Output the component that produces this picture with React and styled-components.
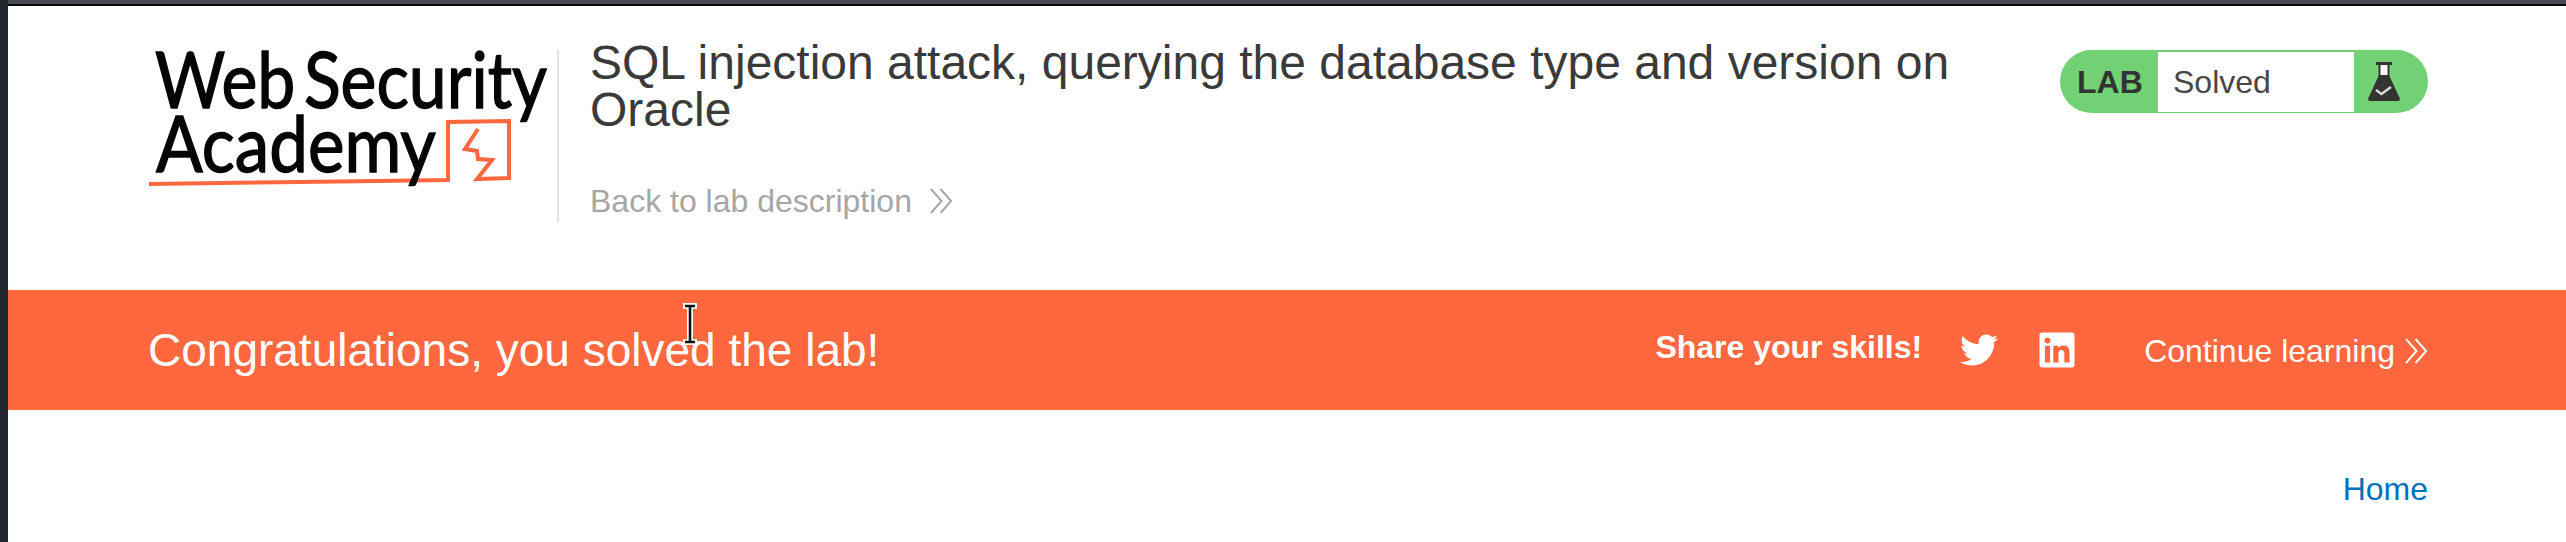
import styled, { createGlobalStyle } from "styled-components";
import { FaTwitter, FaLinkedin } from "react-icons/fa";

const orange = "#ff673e";
const green = "#72d174";
const ink = "#333332";

const GlobalStyle = createGlobalStyle`
  html, body {
    margin: 0;
    padding: 0;
    background: #fff;
    overflow: hidden;
  }
  body {
    font-family: "Liberation Sans", Arial, sans-serif;
    color: ${ink};
  }
`;

const Window = styled.div`
  position: relative;
  display: flex;
  width: 2566px;
  height: 542px;
  overflow: hidden;
`;
const SideEdge = styled.div`
  flex: 0 0 8px;
  background: #22262f;
`;
const Main = styled.div`
  flex: 1;
  display: flex;
  flex-direction: column;
`;
const TopEdge = styled.div`
  height: 4px;
  background: #474c55;
  border-bottom: 2px solid #0a0a0a;
`;
const Header = styled.header`
  height: 284px;
  box-sizing: border-box;
  padding: 24px 138px 0 141px;
  display: flex;
  align-items: flex-start;
`;
const LogoBox = styled.a`
  flex: 0 0 408px;
  height: 192px;
  display: block;
`;
const TitleBlock = styled.div`
  flex: 0 0 1400px;
  height: 172px;
  margin-top: 20px;
  box-sizing: border-box;
  border-left: 2px solid #e3e3e3;
  padding-left: 31px;
`;
const Title = styled.h2`
  margin: -11px 0 0;
  font-size: 48px;
  line-height: 47px;
  font-weight: 400;
  color: #3a3a3a;
`;
const BackLink = styled.a`
  display: flex;
  align-items: center;
  gap: 18px;
  margin-top: 48px;
  font-size: 32px;
  line-height: 40px;
  color: #a6a6a6;
`;
const Badge = styled.div`
  margin: 20px 0 0 auto;
  width: 368px;
  height: 63px;
  box-sizing: border-box;
  border-radius: 32px;
  background: ${green};
  display: flex;
  align-items: stretch;
  padding: 2px 0 1px;
`;
const BadgeLabel = styled.span`
  flex: 0 0 98px;
  box-sizing: border-box;
  padding-left: 17px;
  display: flex;
  align-items: center;
  font-size: 32px;
  font-weight: 700;
`;
const BadgeStatus = styled.span`
  flex: 0 0 196px;
  box-sizing: border-box;
  padding-left: 15px;
  display: flex;
  align-items: center;
  background: #fff;
  font-size: 32px;
  color: #474747;
`;
const BadgeIcon = styled.span`
  flex: 1;
  display: flex;
  align-items: center;
  padding-left: 14px;
`;
const Banner = styled.section`
  height: 120px;
  box-sizing: border-box;
  padding: 0 138px 0 140px;
  background: ${orange};
  color: #fff;
  display: flex;
  align-items: center;
`;
const BannerText = styled.h4`
  margin: 0;
  font-size: 46px;
  font-weight: 400;
`;
const BannerActions = styled.div`
  margin-left: auto;
  display: flex;
  align-items: center;
`;
const ShareLabel = styled.span`
  font-size: 32px;
  font-weight: 700;
  margin: -6px 38px 0 0;
`;
const SocialLink = styled.a`
  display: flex;
  color: #fff;
  font-size: ${(p) => p.$size}px;
  margin-right: ${(p) => p.$gap}px;
`;
const ContinueLink = styled.a`
  display: flex;
  align-items: center;
  gap: 10px;
  margin-top: 2px;
  font-size: 32px;
  color: #fff;
`;
const Nav = styled.nav`
  display: flex;
  justify-content: flex-end;
  padding: 59px 138px 0 0;
`;
const NavLink = styled.a`
  font-size: 32px;
  line-height: 40px;
  color: #0071bc;
`;
const TextCursor = styled.svg`
  position: absolute;
  left: 682px;
  top: 303px;
`;

function Logo() {
  return (
    <LogoBox>
      <svg width="408" height="192" viewBox="149 30 408 192">
        <path
          d="M149 184 L300 182 L448 180 L448 122 L509 121 L509 178 L477 179 L492 160 L478 159 L477 151 L465 149 L478 129"
          fill="none"
          stroke={orange}
          strokeWidth="4"
          strokeLinejoin="miter"
        />
        <text x="155" y="108" fontFamily="Lato, sans-serif" fontWeight="400" fontSize="78" fill="#050505" stroke="#050505" strokeWidth="1.4" wordSpacing="-10" textLength="392" lengthAdjust="spacingAndGlyphs">
          Web Security
        </text>
        <text x="156" y="172" fontFamily="Lato, sans-serif" fontWeight="400" fontSize="78" fill="#050505" stroke="#050505" strokeWidth="1.4" textLength="280" lengthAdjust="spacingAndGlyphs">
          Academy
        </text>
      </svg>
    </LogoBox>
  );
}

function Chevrons({ color, width = 23, height = 26 }) {
  return (
    <svg width={width} height={height} viewBox="0 0 24 26" fill="none" stroke={color} strokeWidth="2" preserveAspectRatio="none">
      <path d="M1 1 L12 13 L1 25" />
      <path d="M11 1 L22 13 L11 25" />
    </svg>
  );
}

function Flask() {
  return (
    <svg width="32" height="40" viewBox="0 0 32 40">
      <path d="M8 0 H24 V3 H21.5 V14 L32 37 Q32 39 30 39 H2 Q0 39 0 37 L10.5 14 V3 H8 Z" fill={ink} />
      <path d="M12.5 3 H19.5 V13 H12.5 Z" fill="#fff" />
      <path d="M8 28 L13.5 32 L23 25" fill="none" stroke="#d8d8d8" strokeWidth="2.4" />
    </svg>
  );
}

export default function App() {
  return (
    <Window>
      <GlobalStyle />
      <SideEdge />
      <Main>
        <TopEdge />
        <Header>
          <Logo />
          <TitleBlock>
            <Title>SQL injection attack, querying the database type and version on Oracle</Title>
            <BackLink>
              Back to lab description
              <Chevrons color="#a6a6a6" />
            </BackLink>
          </TitleBlock>
          <Badge>
            <BadgeLabel>LAB</BadgeLabel>
            <BadgeStatus>Solved</BadgeStatus>
            <BadgeIcon>
              <Flask />
            </BadgeIcon>
          </Badge>
        </Header>
        <Banner>
          <BannerText>Congratulations, you solved the lab!</BannerText>
          <BannerActions>
            <ShareLabel>Share your skills!</ShareLabel>
            <SocialLink $size={38} $gap={39}>
              <FaTwitter />
            </SocialLink>
            <SocialLink $size={40} $gap={67}>
              <FaLinkedin />
            </SocialLink>
            <ContinueLink>
              Continue learning
              <Chevrons color="#fff" />
            </ContinueLink>
          </BannerActions>
        </Banner>
        <Nav>
          <NavLink>Home</NavLink>
        </Nav>
      </Main>
      <TextCursor width="16" height="42" viewBox="0 0 16 42">
        <path d="M1 3 H15 M8 3 V39 M1 39 H15" stroke="#fff" strokeWidth="6" fill="none" />
        <path d="M3 3 H13 M8 3 V39 M3 39 H13" stroke="#111" strokeWidth="2.6" fill="none" />
      </TextCursor>
    </Window>
  );
}
